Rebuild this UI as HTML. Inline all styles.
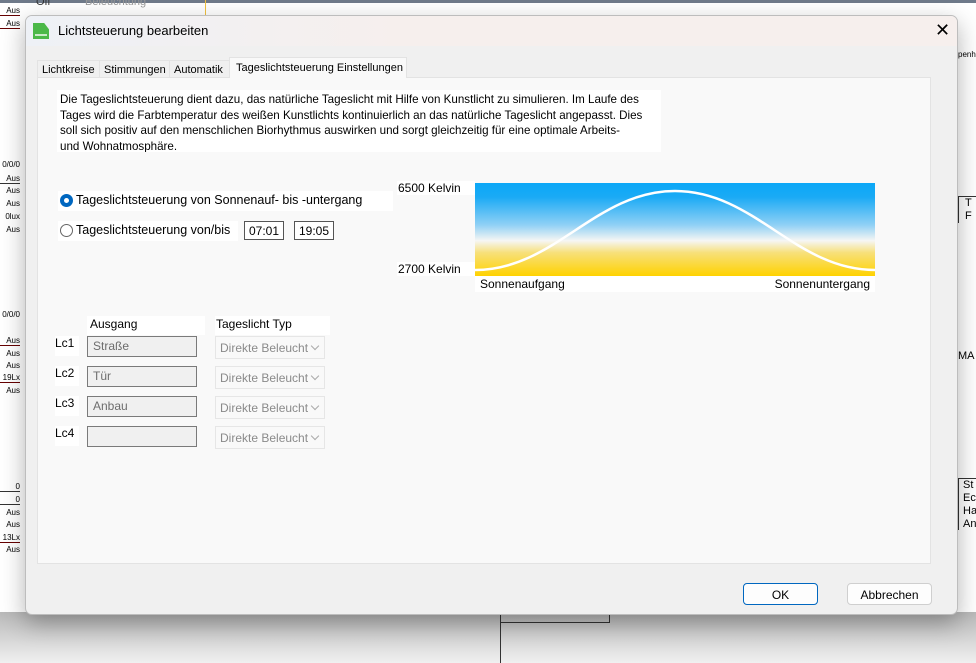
<!DOCTYPE html>
<html><head><meta charset="utf-8"><style>
*{box-sizing:border-box;margin:0;padding:0}
body{width:976px;height:663px;position:relative;overflow:hidden;background:#fff;font-family:"Liberation Sans",sans-serif;font-size:12px;color:#000}
.a{position:absolute}
.lbl{position:absolute;font-size:8px;text-align:right;width:20px}
.tab{position:absolute;top:60px;height:18px;background:#f0f0f0;border:1px solid #e3e3e3;border-bottom:none;font-size:11px;padding:3px 4px 0;white-space:nowrap;overflow:hidden}
.w{background:#fff}
.inp{position:absolute;width:110px;height:21px;border:1px solid #7a7a7a;background:#f0f0f0;color:#6d6d6d;padding:2px 5px;font-size:12px}
.cmb{position:absolute;width:110px;height:23px;border:1px solid #e6e6e6;background:#f9f9f9;color:#8a8a8a;padding:4px 4px;font-size:12px;white-space:nowrap;overflow:hidden}
.cmb:after{content:"";position:absolute;right:6px;top:6px;width:5px;height:5px;border-right:1px solid #aaa;border-bottom:1px solid #aaa;transform:rotate(45deg)}
.lc{position:absolute;left:55px;width:24px;background:#fff;font-size:12px;height:20px}
</style></head><body>
<div class="a" style="left:0;top:0;width:976px;height:3px;background:#6f7a8a"></div>
<div class="a" style="left:0;top:612px;width:976px;height:51px;background:linear-gradient(#b8b8b8,#f0f0f0)"></div>
<div class="a" style="left:500px;top:615px;width:110px;height:8px;border:1px solid #333;border-top:none"></div>
<div class="a" style="left:500px;top:620px;width:1px;height:43px;background:#333"></div>
<div class="a" style="left:85px;top:-4px;font-size:11px;color:#999">Beleuchtung</div>
<div class="a" style="left:36px;top:-4px;font-size:11px;color:#333">Off</div>
<div class="a" style="left:205px;top:0;width:1px;height:15px;background:#f0c040"></div>
<div class="lbl" style="left:0;top:6px;border-bottom:1px solid #600">Aus</div>
<div class="lbl" style="left:0;top:19px;border-bottom:1px solid #600">Aus</div>
<div class="lbl" style="left:0;top:160px">0/0/0</div>
<div class="lbl" style="left:0;top:174px;border-bottom:1px solid #333">Aus</div>
<div class="lbl" style="left:0;top:186px">Aus</div>
<div class="lbl" style="left:0;top:199px">Aus</div>
<div class="lbl" style="left:0;top:212px">0lux</div>
<div class="lbl" style="left:0;top:225px">Aus</div>
<div class="lbl" style="left:0;top:310px">0/0/0</div>
<div class="lbl" style="left:0;top:336px;border-bottom:1px solid #600">Aus</div>
<div class="lbl" style="left:0;top:349px">Aus</div>
<div class="lbl" style="left:0;top:361px">Aus</div>
<div class="lbl" style="left:0;top:373px;border-bottom:1px solid #600">19Lx</div>
<div class="lbl" style="left:0;top:386px">Aus</div>
<div class="lbl" style="left:0;top:482px;border-bottom:1px solid #333">0</div>
<div class="lbl" style="left:0;top:495px;border-bottom:1px solid #333">0</div>
<div class="lbl" style="left:0;top:508px">Aus</div>
<div class="lbl" style="left:0;top:520px">Aus</div>
<div class="lbl" style="left:0;top:533px;border-bottom:1px solid #600">13Lx</div>
<div class="lbl" style="left:0;top:545px">Aus</div>
<div class="a" style="left:958px;top:50px;font-size:8px">penh</div>
<div class="a" style="left:958px;top:196px;width:18px;height:27px;border-top:1px solid #333;border-left:1px solid #333;font-size:11px;padding-left:6px;line-height:13px">T<br>F</div>
<div class="a" style="left:958px;top:350px;font-size:11px">MA</div>
<div class="a" style="left:958px;top:478px;width:18px;height:52px;border-top:1px solid #333;border-left:1px solid #333;font-size:11px;padding-left:4px;line-height:13px">St<br>Ec<br>Ha<br>An</div>

<div class="a" style="left:25px;top:15px;width:933px;height:600px;background:#f0f0f0;border:1px solid #bdbdbd;border-radius:7px;box-shadow:0 8px 24px rgba(0,0,0,.3);overflow:hidden">
 <div class="a" style="left:0;top:0;width:933px;height:30px;background:linear-gradient(90deg,#eef1f6,#f6efed 40%,#f6efed)"></div>
 <div class="a" style="left:7px;top:7px;width:16px;height:16px;background:#4bb848;clip-path:polygon(0 0,70% 0,100% 40%,100% 100%,0 100%)"></div>
 <div class="a" style="left:9px;top:18px;width:12px;height:2px;background:#fff;opacity:.7"></div>
 <div class="a" style="left:32px;top:7px;font-size:13px">Lichtsteuerung bearbeiten</div>
 <div class="a" style="left:909px;top:4px;font-size:18px;font-weight:300">✕</div>
</div>
<div class="tab" style="left:37px;width:63px">Lichtkreise</div>
<div class="tab" style="left:99px;width:71px">Stimmungen</div>
<div class="tab" style="left:169px;width:61px">Automatik</div>
<div class="tab" style="left:229px;top:57px;height:21px;width:178px;background:#f9f9f9;z-index:2;padding-top:4px;padding-left:6px">Tageslichtsteuerung Einstellungen</div>
<div class="a" style="left:37px;top:77px;width:894px;height:487px;background:#f9f9f9;border:1px solid #e3e3e3"></div>

<div class="a w" style="left:57px;top:90px;width:604px;height:62px;padding:2px 3px;line-height:15.5px;font-size:11.6px;white-space:nowrap;overflow:hidden">Die Tageslichtsteuerung dient dazu, das natürliche Tageslicht mit Hilfe von Kunstlicht zu simulieren. Im Laufe des<br>Tages wird die Farbtemperatur des weißen Kunstlichts kontinuierlich an das natürliche Tageslicht angepasst. Dies<br>soll sich positiv auf den menschlichen Biorhythmus auswirken und sorgt gleichzeitig für eine optimale Arbeits-<br>und Wohnatmosphäre.</div>

<div class="a w" style="left:58px;top:191px;width:335px;height:20px"></div>
<div class="a" style="left:60px;top:194px;width:13px;height:13px;border-radius:50%;background:#0067c0"></div>
<div class="a" style="left:64px;top:198px;width:5px;height:5px;border-radius:50%;background:#fff"></div>
<div class="a" style="left:76px;top:193px;font-size:12.5px">Tageslichtsteuerung von Sonnenauf- bis -untergang</div>
<div class="a w" style="left:58px;top:221px;width:180px;height:20px"></div>
<div class="a" style="left:60px;top:224px;width:13px;height:13px;border-radius:50%;border:1px solid #666"></div>
<div class="a" style="left:76px;top:223px;font-size:12.5px">Tageslichtsteuerung von/bis</div>
<div class="a w" style="left:244px;top:221px;width:40px;height:19px;border:1px solid #555;padding:2px 4px">07:01</div>
<div class="a w" style="left:294px;top:221px;width:40px;height:19px;border:1px solid #555;padding:2px 4px">19:05</div>

<div class="a w" style="left:397px;top:181px;width:78px;height:14px;padding-left:1px">6500 Kelvin</div>
<div class="a w" style="left:397px;top:262px;width:78px;height:14px;padding-left:1px">2700 Kelvin</div>
<svg class="a" style="left:475px;top:183px" width="401" height="94">
<defs><linearGradient id="g" x1="0" y1="0" x2="0" y2="1">
<stop offset="0" stop-color="#0ba8f7"/><stop offset="0.15" stop-color="#1aaaf5"/><stop offset="0.45" stop-color="#8fd0f5"/><stop offset="0.62" stop-color="#f6f6f4"/><stop offset="0.75" stop-color="#f7e07a"/><stop offset="1" stop-color="#ffd200"/></linearGradient></defs>
<rect width="400" height="93" fill="url(#g)"/>
<path d="M0,87 C80,87 120,8 200,8 C280,8 320,87 400,87" fill="none" stroke="#fff" stroke-width="2.5"/>
</svg>
<div class="a w" style="left:475px;top:276px;width:400px;height:16px;padding:1px 5px;font-size:12px">Sonnenaufgang<span style="float:right">Sonnenuntergang</span></div>

<div class="a w" style="left:87px;top:316px;width:118px;height:19px;padding:1px 3px">Ausgang</div>
<div class="a w" style="left:215px;top:316px;width:115px;height:19px;padding:1px 1px">Tageslicht Typ</div>
<div class="lc" style="top:336px">Lc1</div>
<div class="lc" style="top:366px">Lc2</div>
<div class="lc" style="top:396px">Lc3</div>
<div class="lc" style="top:426px">Lc4</div>
<div class="inp" style="left:87px;top:336px">Straße</div>
<div class="inp" style="left:87px;top:366px">Tür</div>
<div class="inp" style="left:87px;top:396px">Anbau</div>
<div class="inp" style="left:87px;top:426px"></div>
<div class="cmb" style="left:215px;top:336px">Direkte Beleucht</div>
<div class="cmb" style="left:215px;top:366px">Direkte Beleucht</div>
<div class="cmb" style="left:215px;top:396px">Direkte Beleucht</div>
<div class="cmb" style="left:215px;top:426px">Direkte Beleucht</div>

<div class="a" style="left:743px;top:583px;width:75px;height:22px;border:1px solid #0067c0;border-radius:4px;background:#fdfdfd;text-align:center;padding-top:4px">OK</div>
<div class="a" style="left:847px;top:583px;width:85px;height:22px;border:1px solid #cfcfcf;border-radius:4px;background:#fdfdfd;text-align:center;padding-top:4px">Abbrechen</div>
</body></html>
